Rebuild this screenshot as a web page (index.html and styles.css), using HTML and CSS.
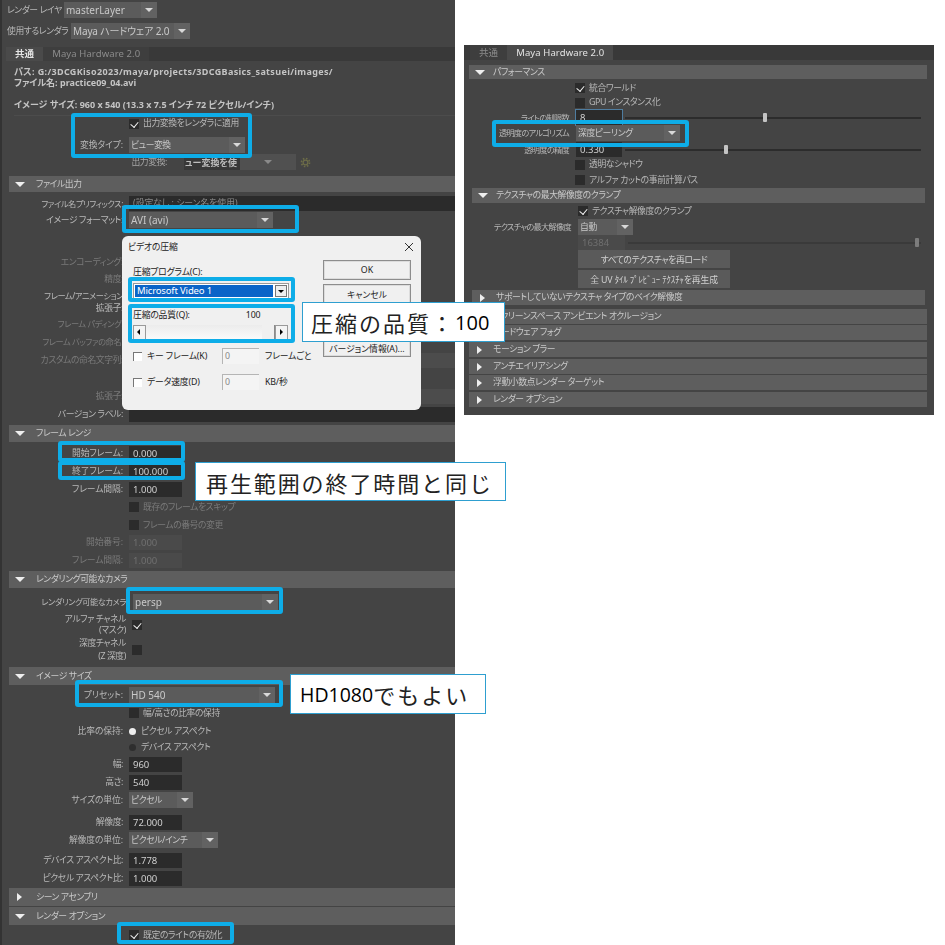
FILE: index.html
```html
<!DOCTYPE html>
<html lang="ja">
<head>
<meta charset="utf-8">
<title>Render Settings</title>
<link rel="stylesheet" href="styles.css">
</head>
<body>
<main class="stage">

<section class="panel panel-left">
  <div class="row h16 mt2 top"><span class="lab top1">レンダー レイヤ</span><span class="dd w93"><span class="dd-t">masterLayer</span><i class="arr"></i></span></div>
  <div class="row h16 mt5 top"><span class="lab top2">使用するレンダラ</span><span class="dd w119"><span class="dd-t tight">Maya ハードウェア 2.0</span><i class="arr"></i></span></div>
  <div class="tabs mt8"><span class="tab on">共通</span><span class="tab">Maya Hardware 2.0</span></div>
  <div class="info">
    <p class="wide">パス: G:/3DCGKiso2023/maya/projects/3DCGBasics_satsuei/images/</p>
    <p>ファイル名: practice09_04.avi</p>
    <p class="blank"></p>
    <p>イメージ サイズ: 960 x 540 (13.3 x 7.5 インチ 72 ピクセル/インチ)</p>
  </div>
  <div class="row h15 ctl"><i class="cb on"></i><span class="cb-l">出力変換をレンダラに適用</span></div>
  <div class="row mt5"><span class="lab ks">変換タイプ:</span><span class="dd w116"><span class="dd-t jp">ビュー変換</span><i class="arr"></i></span></div>
  <div class="row h16"><span class="lab out">出力変換:</span><span class="fld-dim">ュー変換を使</span><span class="dd w56 dim"><span class="dd-t"></span><i class="arr"></i></span><svg class="gear" viewBox="0 0 12 12"><circle cx="6" cy="6" r="2.6"/><circle class="teeth" cx="6" cy="6" r="4.4"/></svg></div>
  <h2 class="sec h16 mt6"><i class="tri-d"></i>ファイル出力</h2>
  <div class="row mt2"><span class="lab tk">ファイル名プリフィックス:</span><span class="fld grow">(設定なし : シーン名を使用)</span></div>
  <div class="row h16"><span class="lab">イメージ フォーマット:</span><span class="dd w144"><span class="dd-t">AVI (avi)</span><i class="arr"></i></span></div>
  <div class="row h17 mt26"><span class="lab dis">エンコーディング:</span></div>
  <div class="row h17"><span class="lab dis">精度:</span></div>
  <div class="row h14"><span class="lab tk">フレーム/アニメーション</span></div>
  <div class="row h12"><span class="lab">拡張子:</span></div>
  <div class="row"><span class="lab dis tk">フレーム パディング:</span></div>
  <div class="row h19"><span class="lab dis tk">フレーム バッファの命名:</span></div>
  <div class="row"><span class="lab dis">カスタムの命名文字列:</span><span class="fld grow off"></span></div>
  <div class="row"></div>
  <div class="row"><span class="lab dis">拡張子:</span><span class="fld grow off"></span></div>
  <div class="row h19"><span class="lab">バージョン ラベル:</span><span class="fld grow"></span></div>
  <h2 class="sec h17 mt1"><i class="tri-d"></i>フレーム レンジ</h2>
  <div class="row mt2"><span class="lab ks">開始フレーム:</span><span class="fld w53">0.000</span></div>
  <div class="row"><span class="lab ks">終了フレーム:</span><span class="fld w53">100.000</span></div>
  <div class="row"><span class="lab ks">フレーム間隔:</span><span class="fld w53">1.000</span></div>
  <div class="row ctl"><i class="cb"></i><span class="cb-l dis">既存のフレームをスキップ</span></div>
  <div class="row ctl"><i class="cb"></i><span class="cb-l dis">フレームの番号の変更</span></div>
  <div class="row h17"><span class="lab dis ks">開始番号:</span><span class="fld w53 off">1.000</span></div>
  <div class="row"><span class="lab dis ks">フレーム間隔:</span><span class="fld w53 off">1.000</span></div>
  <h2 class="sec h17 mt2"><i class="tri-d"></i>レンダリング可能なカメラ</h2>
  <div class="row h17 mt5"><span class="lab lab-w tk">レンダリング可能なカメラ</span><span class="dd w145 cam"><span class="dd-t">persp</span><i class="arr"></i></span></div>
  <div class="row h24 mt3"><span class="lab lab-w two">アルファ チャネル<br>(マスク)</span><i class="cb on"></i></div>
  <div class="row h26"><span class="lab lab-w two tall">深度チャネル<br>(Z 深度)</span><i class="cb"></i></div>
  <h2 class="sec h18 mt4"><i class="tri-d"></i>イメージ サイズ</h2>
  <div class="row mt1"><span class="lab ks">プリセット:</span><span class="dd w146"><span class="dd-t">HD 540</span><i class="arr"></i></span></div>
  <div class="row ctl"><i class="cb"></i><span class="cb-l">幅/高さの比率の保持</span></div>
  <div class="row"><span class="lab ks">比率の保持:</span><i class="rb on"></i><span class="rb-l">ピクセル アスペクト</span></div>
  <div class="row h15 ctl"><i class="rb"></i><span class="rb-l">デバイス アスペクト</span></div>
  <div class="row"><span class="lab">幅:</span><span class="fld w53">960</span></div>
  <div class="row"><span class="lab">高さ:</span><span class="fld w53">540</span></div>
  <div class="row rule"><span class="lab ks">サイズの単位:</span><span class="dd w64"><span class="dd-t jp">ピクセル</span><i class="arr"></i></span></div>
  <div class="row mt4"><span class="lab">解像度:</span><span class="fld w53">72.000</span></div>
  <div class="row"><span class="lab ks">解像度の単位:</span><span class="dd w89"><span class="dd-t jp">ピクセル/インチ</span><i class="arr"></i></span></div>
  <div class="row mt2"><span class="lab">デバイス アスペクト比:</span><span class="fld w53">1.778</span></div>
  <div class="row"><span class="lab">ピクセル アスペクト比:</span><span class="fld w53">1.000</span></div>
  <h2 class="sec h18 mt1"><i class="tri-r"></i>シーン アセンブリ</h2>
  <h2 class="sec h18 mt1"><i class="tri-d"></i>レンダー オプション</h2>
  <div class="row mt1 ctl"><i class="cb on"></i><span class="cb-l">既定のライトの有効化</span></div>
</section>

<section class="panel panel-right">
  <div class="tabs"><span class="tab">共通</span><span class="tab on">Maya Hardware 2.0</span></div>
  <h2 class="sec h14 mt5"><i class="tri-d"></i>パフォーマンス</h2>
  <div class="row h14 mt2 ctl"><i class="cb on"></i><span class="cb-l">統合ワールド</span></div>
  <div class="row h15 ctl"><i class="cb"></i><span class="cb-l">GPU インスタンス化</span></div>
  <div class="row h15"><span class="lab tk">ライトの制限数</span><span class="fld w46 focus">8</span><span class="slider"><i class="knob" style="left:46.6%"></i></span></div>
  <div class="row h15"><span class="lab tk">透明度のアルゴリズム</span><span class="dd w104"><span class="dd-t jp">深度ピーリング</span><i class="arr"></i></span></div>
  <div class="row h15 mt2"><span class="lab tk">透明度の精度</span><span class="fld w46">0.330</span><span class="slider"><i class="knob" style="left:33.4%"></i></span></div>
  <div class="row h15 ctl"><i class="cb"></i><span class="cb-l">透明なシャドウ</span></div>
  <div class="row h16 ctl"><i class="cb"></i><span class="cb-l">アルファ カットの事前計算パス</span></div>
  <h2 class="sec in h15"><i class="tri-d"></i>テクスチャの最大解像度のクランプ</h2>
  <div class="row h16 ctl nest"><i class="cb on"></i><span class="cb-l">テクスチャ解像度のクランプ</span></div>
  <div class="row h15 nest"><span class="lab tk">テクスチャの最大解像度</span><span class="dd w55"><span class="dd-t jp">自動</span><i class="arr"></i></span></div>
  <div class="row h15 mt1 nest"><span class="lab"></span><span class="fld w47 off">16384</span><span class="slider faint"><i class="knob" style="left:98%"></i></span></div>
  <button class="mbtn">すべてのテクスチャを再ロード</button>
  <button class="mbtn mt2">全 UV ﾀｲﾙ ﾌﾟﾚﾋﾞｭｰ ﾃｸｽﾁｬを再生成</button>
  <h2 class="sec in h15 mt2"><i class="tri-r"></i>サポートしていないテクスチャ タイプのベイク解像度</h2>
  <h2 class="sec h15 mt4"><i class="tri-r"></i>スクリーンスペース アンビエント オクルージョン</h2>
  <h2 class="sec h15 mt1"><i class="tri-r"></i>ハードウェア フォグ</h2>
  <h2 class="sec h15 mt2"><i class="tri-r"></i>モーション ブラー</h2>
  <h2 class="sec h15 mt2"><i class="tri-r"></i>アンチエイリアシング</h2>
  <h2 class="sec h15 mt1"><i class="tri-r"></i>浮動小数点レンダー ターゲット</h2>
  <h2 class="sec h15 mt2"><i class="tri-r"></i>レンダー オプション</h2>
</section>

<div class="dialog">
  <div class="dlg-title"><span>ビデオの圧縮</span><svg class="dlg-x" viewBox="0 0 10 10"><path d="M1 1l8 8M9 1l-8 8"/></svg></div>
  <div class="dlg-body">
    <div class="dlg-main">
      <label class="dlg-lab">圧縮プログラム(C):</label>
      <div class="dlg-sel"><span class="dlg-sel-t">Microsoft Video 1</span><span class="dlg-sel-b"><i></i></span></div>
      <div class="dlg-q"><span>圧縮の品質(Q):</span><span class="dlg-q-v">100</span></div>
      <div class="scroll"><span class="sb"><i class="sl"></i></span><span class="strack"></span><span class="thumb"></span><span class="sb"><i class="sr"></i></span></div>
      <div class="dlg-opt first"><i class="dcb"></i><span class="dlg-opt-l">キー フレーム(K)</span><span class="dinp">0</span><span>フレームごと</span></div>
      <div class="dlg-opt"><i class="dcb"></i><span class="dlg-opt-l">データ速度(D)</span><span class="dinp">0</span><span>KB/秒</span></div>
    </div>
    <div class="dlg-btns">
      <button class="wbtn">OK</button>
      <button class="wbtn">キャンセル</button>
      <button class="wbtn ver">バージョン情報(A)...</button>
    </div>
  </div>
</div>

<i class="hl hl1"></i><i class="hl hl2"></i><i class="hl hl3"></i><i class="hl hl4"></i><i class="hl hl5"></i><i class="hl hl6"></i><i class="hl hl7"></i><i class="hl hl8"></i><i class="hl hl9"></i><i class="hl hl10"></i>

<div class="note n1">圧縮の品質：<b>100</b></div>
<div class="note n2">再生範囲の終了時間と同じ</div>
<div class="note n3"><b>HD1080</b>でもよい</div>

</main>
</body>
</html>
```

FILE: styles.css
```css
* { box-sizing: border-box; }
html, body { margin: 0; padding: 0; background: #fff; }
body { font-family: "Noto Sans", "Noto Sans CJK JP", sans-serif; font-feature-settings: "palt"; }
.stage { position: relative; width: 945px; height: 945px; overflow: hidden; }

.panel {
  position: absolute; background: #444; color: #b8b8b8;
  font-size: 9.5px; line-height: 11px; filter: blur(.35px);
  --lab: 123px; --gap: 6px;
}
.panel-left { left: 0; top: 0; width: 455px; height: 945px; border-left: 2px solid #333; --lab: 121px; }
.panel-right { left: 464px; top: 45px; width: 470px; height: 370px; --lab: 105px; --gap: 7px; }

.row { display: flex; align-items: center; height: 18px; white-space: nowrap; }
.h12 { height: 12px; } .h14 { height: 14px; } .h15 { height: 15px; } .h16 { height: 16px; }
.h17 { height: 17px; } .h18 { height: 18px; } .h19 { height: 19px; } .h24 { height: 24px; } .h26 { height: 26px; }
.mt1 { margin-top: 1px; } .mt2 { margin-top: 2px; } .mt3 { margin-top: 3px; } .mt4 { margin-top: 4px; }
.mt5 { margin-top: 5px; } .mt6 { margin-top: 6px; } .mt8 { margin-top: 8px; } .mt26 { margin-top: 26px; }

.lab, .cb-l, .rb-l, .sec, .jp, .mbtn { font-size: 8.8px; letter-spacing: -.4px; }
.lab { width: var(--lab); margin-right: var(--gap); text-align: right; flex: none; }
.lab.tk { font-size: 8.2px; letter-spacing: -.4px; }
.panel-right .lab.tk { letter-spacing: -.7px; }
.lab.ks { letter-spacing: -.1px; }
.lab-w { width: calc(var(--lab) + 3px); }
.lab.two { line-height: 11px; }
.lab.two.tall { line-height: 13px; }
.lab.out { width: 165px; margin-right: 17px; color: #a6a6a6; }
.dis { color: #7a7a7a; }
.ctl { padding-left: calc(var(--lab) + var(--gap)); }
.panel-right .ctl { padding-left: 111px; }
.panel-right .ctl.nest { padding-left: 114px; }
.panel-right .nest { --lab: 107px; }

.top .lab { text-align: left; margin-right: 3px; margin-left: 5px; }
.top .top1 { width: 54px; }
.top .top2 { width: 61px; }

.tabs { display: flex; height: 14px; margin-left: 4px; background: #393939; line-height: 14px; }
.panel-right .tabs { height: 15px; margin-left: 0; padding-left: 6px; line-height: 15px; }
.tab { padding: 0 9px; color: #8c8c8c; background: #3e3e3e; letter-spacing: .1px; }
.tab.on { background: #4a4a4a; color: #e4e4e4; font-weight: 700; }
.panel-right .tab.on { font-weight: 400; }

.info { height: 55px; padding-top: 5px; margin-left: 12px; font-weight: 700; font-size: 9px; color: #c4c4c4; border-bottom: 1px solid #4c4c4c; }
.info p { margin: 0; height: 11px; white-space: nowrap; }
.info .wide { letter-spacing: .35px; }

.dd { display: flex; height: 16px; background: #5b5b5b; color: #c8c8c8; flex: none; }
.dd-t { flex: 1; padding-left: 2px; font-size: 10px; line-height: 16px; overflow: hidden; }
.dd-t.tight { letter-spacing: -.15px; }
.dd-t.jp { font-size: 8.8px; }
.dd .arr { width: 16px; flex: none; background: #626262; margin-left: 1px; position: relative; }
.arr::after { content: ""; position: absolute; left: 4px; top: 6px; border: 4px solid transparent; border-top: 4px solid #d8d8d8; border-bottom: 0; }
.dd.dim { background: #505050; }
.dd.dim .arr { background: #505050; margin-right: 20px; }
.dd.dim .arr::after { border-top-color: #8a8a8a; }
.cam { margin-left: 1px; }
.w55 { width: 55px; } .w56 { width: 56px; } .w64 { width: 64px; } .w89 { width: 89px; } .w93 { width: 93px; }
.w104 { width: 104px; } .w116 { width: 116px; } .w119 { width: 119px; } .w144 { width: 144px; } .w145 { width: 145px; } .w146 { width: 146px; }
.w46 { width: 46px; } .w47 { width: 47px; } .w53 { width: 53px; }

.fld { display: block; height: 15px; line-height: 15px; padding-left: 4px; background: #2b2b2b; color: #d0d0d0; flex: none; }
.fld.grow { flex: 1; color: #8a8a8a; font-size: 8.8px; }
.fld.off { background: #4a4a4a; color: #6f6f6f; }
.fld.grow.off { background: #4c4c4c; }
.fld.focus { box-shadow: 0 0 0 1px #4f7da0; }
.fld-dim { width: 56px; height: 15px; line-height: 15px; padding-left: 1px; background: #383838; color: #bdbdbd; flex: none; font-weight: 700; font-size: 9px; }
.gear { width: 11px; height: 11px; margin-left: 4px; flex: none; fill: none; stroke: #6c6c48; stroke-width: 1.4; }
.gear .teeth { stroke-width: 1.8; stroke-dasharray: 1.7 1.75; }

.slider { position: relative; flex: 1; height: 2px; background: #2c2c2c; margin: 0 13px 0 3px; }
.slider.faint { background: #3a3a3a; }
.knob { position: absolute; top: -4px; width: 4px; height: 9px; background: #c4c4c4; border-radius: 1px; }
.faint .knob { background: #7c7c7c; }

.cb { display: block; position: relative; width: 10px; height: 10px; background: #2b2b2b; flex: none; }
.cb.on::after { content: ""; position: absolute; left: 3.2px; top: 1px; width: 3.5px; height: 6px; border: solid #f2f2f2; border-width: 0 1.6px 1.6px 0; transform: rotate(40deg); }
.cb-l { margin-left: 4px; }
.rb { display: block; width: 7px; height: 7px; border-radius: 50%; background: #2e2e2e; flex: none; }
.rb.on { background: #eee; }
.rb-l { margin-left: 5px; }

.sec { display: flex; align-items: center; margin: 0 0 0 7px; background: #5e5e5e; font-weight: 400; color: #c9c9c9; line-height: 11px; white-space: nowrap; }
.sec.mt1 { margin-top: 1px; } .sec.mt2 { margin-top: 2px; } .sec.mt3 { margin-top: 3px; } .sec.mt4 { margin-top: 4px; } .sec.mt5 { margin-top: 5px; } .sec.mt6 { margin-top: 6px; }
.panel-right .sec { margin-left: 5px; margin-right: 7px; }
.panel-right .sec.in { margin-left: 8px; margin-right: 9px; }
.tri-d { width: 0; height: 0; margin: 0 11px 0 6px; border: 5px solid transparent; border-top: 5px solid #eee; border-bottom: 0; flex: none; }
.tri-r { width: 0; height: 0; margin: 0 14px 0 8px; border: 4px solid transparent; border-left: 5px solid #eee; border-right: 0; flex: none; }
.panel-right .tri-d { margin-right: 8px; }
.panel-right .tri-r { margin-right: 11px; }

.mbtn { display: block; width: 152px; height: 18px; margin-left: 114px; padding: 0; border: 0; background: #5a5a5a; color: #d0d0d0; font-family: inherit; font-feature-settings: "palt"; white-space: nowrap; }
.mbtn + .mbtn { letter-spacing: -.1px; }

.dialog { position: absolute; left: 122px; top: 236px; width: 299px; height: 174px; background: #f0f0f0; border-radius: 6px; color: #222; font-size: 8.8px; letter-spacing: -.15px; line-height: 12px; }
.dlg-title { display: flex; justify-content: space-between; align-items: center; height: 22px; padding: 0 7px 0 6px; }
.dlg-x { width: 10px; height: 10px; stroke: #333; stroke-width: 1; fill: none; }
.dlg-body { display: flex; padding: 2px 10px 0 11px; }
.dlg-main { width: 156px; margin-right: 34px; flex: none; white-space: nowrap; }
.dlg-lab { display: block; margin-top: 6px; height: 18px; }
.dlg-sel { display: flex; width: 156px; height: 16px; background: #fff; border: 1px solid #9a9a9a; padding: 1px; margin-top: -1px; }
.dlg-sel-t { flex: 1; background: #0a64c8; color: #fff; padding-left: 2px; font-size: 9.5px; line-height: 12px; }
.dlg-sel-b { position: relative; width: 12px; margin-left: 2px; background: #eee; border: 1px solid #777; flex: none; }
.dlg-sel-b i { position: absolute; left: 2px; top: 4px; border: 3px solid transparent; border-top: 3px solid #000; border-bottom: 0; }
.dlg-q { display: flex; margin-top: 10px; height: 13px; }
.dlg-q-v { margin-left: 56px; }
.scroll { display: flex; height: 15px; margin-top: 3px; background: #f8f8f8; width: 155px; }
.sb { position: relative; width: 13px; background: #f4f4f4; border: 1px solid #9a9a9a; flex: none; }
.sl, .sr { position: absolute; top: 3px; border: 3px solid transparent; }
.sl { left: 3px; border-right: 3px solid #000; border-left: 0; }
.sr { left: 4px; border-left: 3px solid #000; border-right: 0; }
.strack { flex: 1; background: linear-gradient(#ececec, #fbfbfb); }
.thumb { width: 13px; background: #f0f0f0; border: 1px solid #8a8a8a; border-width: 0 1px 1px 0; flex: none; }
.dlg-opt { display: flex; align-items: center; height: 16px; margin-top: 10px; }
.dlg-opt.first { margin-top: 8px; }
.dcb { width: 9px; height: 9px; background: #fff; border: 1px solid #777; border-width: 1px 0 0 1px; flex: none; }
.dlg-opt-l { width: 75px; margin-left: 5px; flex: none; }
.dinp { width: 37px; height: 16px; margin-right: 6px; padding-left: 2px; color: #888; line-height: 15px; border: 1px solid #b5b5b5; border-width: 1px 0 0 1px; background: #f4f4f4; flex: none; }
.dlg-btns { width: 88px; flex: none; }
.wbtn { display: block; width: 88px; height: 20px; padding: 0; background: #f0f0f0; color: #222; font-family: inherit; font-size: inherit; font-feature-settings: "palt"; border: 1px solid #8d8d8d; box-shadow: inset 0 0 0 1px #dcdcdc; white-space: nowrap; }
.wbtn + .wbtn { margin-top: 4px; }
.wbtn.ver { margin-top: 35px; height: 18px; padding-top: 2px; border-top: 0; }

.hl { position: absolute; border: 4px solid #0eade8; border-radius: 3px; display: block; }
.hl1 { left: 71px; top: 113px; width: 181px; height: 45px; }
.hl2 { left: 122px; top: 205px; width: 177px; height: 28px; }
.hl3 { left: 128px; top: 277px; width: 167px; height: 25px; }
.hl4 { left: 128px; top: 304px; width: 167px; height: 39px; }
.hl5 { left: 58px; top: 441px; width: 127px; height: 21px; }
.hl6 { left: 58px; top: 461px; width: 127px; height: 19px; }
.hl7 { left: 126px; top: 587px; width: 157px; height: 27px; }
.hl8 { left: 75px; top: 680px; width: 208px; height: 27px; }
.hl9 { left: 117px; top: 922px; width: 117px; height: 22px; }
.hl10 { left: 492px; top: 120px; width: 197px; height: 27px; }

.note { position: absolute; display: flex; align-items: center; background: #fff; border: 1px solid #2e9fd0; color: #222; white-space: nowrap; font-feature-settings: normal; font-family: "Noto Sans CJK JP", sans-serif; font-size: 22px; }
.note b { font-family: "Open Sans", "Noto Sans", sans-serif; font-size: 20px; font-weight: 500; letter-spacing: 0; color: #000; }
.n1 { left: 302px; top: 302px; width: 203px; height: 40px; padding-left: 8px; letter-spacing: 2px; }
.n2 { left: 195px; top: 462px; width: 311px; height: 39px; padding-left: 10px; letter-spacing: 1.9px; }
.n3 { left: 290px; top: 674px; width: 196px; height: 40px; padding-left: 9px; letter-spacing: 2px; }
.n3 b { font-size: 19.5px; }
```
